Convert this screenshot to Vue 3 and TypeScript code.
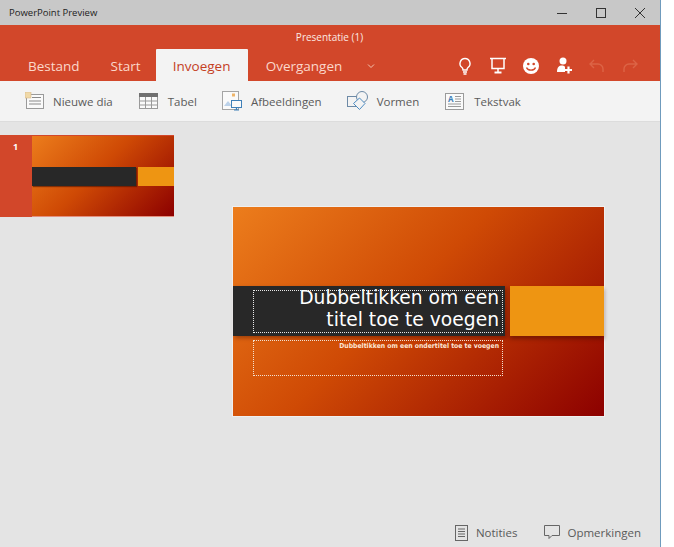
<script setup lang="ts">
const tabs = [
  { label: 'Bestand', active: false },
  { label: 'Start', active: false },
  { label: 'Invoegen', active: true },
  { label: 'Overgangen', active: false },
]
</script>

<template>
  <div class="app">
    <div class="window">
      <header class="titlebar">
        <span class="app-name">PowerPoint Preview</span>
        <div class="win-controls">
          <svg width="12" height="12" viewBox="0 0 12 12"><path d="M1 6.5h10" stroke="#333" fill="none" /></svg>
          <svg width="12" height="12" viewBox="0 0 12 12"><rect x="1.5" y="1.5" width="9" height="9" stroke="#333" fill="none" /></svg>
          <svg width="12" height="12" viewBox="0 0 12 12"><path d="M1 1l10 10M11 1L1 11" stroke="#333" fill="none" /></svg>
        </div>
      </header>

      <section class="ribbon">
        <div class="doc-title">Presentatie (1)</div>
        <div class="tabrow">
          <nav class="tabs">
            <span v-for="t in tabs" :key="t.label" class="tab" :class="{ active: t.active }">{{ t.label }}</span>
            <svg class="chev" width="8" height="6" viewBox="0 0 8 6"><path d="M1 1.500l3 3 3-3" stroke="#f4c4b0" fill="none" /></svg>
          </nav>
          <div class="actions">
            <svg width="18" height="20" viewBox="0 0 18 20"><path d="M9 2.500a5 5 0 0 0-3 9c.8.7 1 1.400 1 2.500h4c0-1.100.2-1.800 1-2.500a5 5 0 0 0-3-9z" stroke="#fff" stroke-width="1.400" fill="none" /><path d="M7 16h4M7.500 18h3" stroke="#fff" stroke-width="1.300" /></svg>
            <svg width="18" height="20" viewBox="0 0 18 20"><path d="M1 2.500h16M3 3v9.500h12V3M9 12.500V16" stroke="#fff" stroke-width="1.500" fill="none" /><path d="M5.500 15.500h7v2h-7z" fill="#fff" /></svg>
            <svg width="18" height="18" viewBox="0 0 18 18"><circle cx="9" cy="9" r="8" fill="#fff" /><circle cx="6.300" cy="7" r="1.300" fill="#d2472a" /><circle cx="11.700" cy="7" r="1.300" fill="#d2472a" /><path d="M4.500 10.500c1 3.500 8 3.500 9 0" stroke="#d2472a" stroke-width="1.300" fill="none" /></svg>
            <svg width="18" height="18" viewBox="0 0 18 18"><circle cx="8" cy="4" r="3.500" fill="#fff" /><path d="M2 15c0-5 2-6.500 5-6.500 1.500 0 2.500.5 3 1.500v5z" fill="#fff" /><path d="M13.500 9.500v7M10 13h7" stroke="#fff" stroke-width="2.200" /></svg>
            <svg width="18" height="14" viewBox="0 0 18 14"><path d="M6 1L2 5l4 4M2 5h8a5 5 0 0 1 5 5v3" stroke="#dc6446" stroke-width="1.400" fill="none" /></svg>
            <svg width="18" height="14" viewBox="0 0 18 14"><path d="M12 1l4 4-4 4M16 5H8a5 5 0 0 0-5 5v3" stroke="#dc6446" stroke-width="1.400" fill="none" /></svg>
          </div>
        </div>
      </section>

      <section class="toolbar">
        <div class="tool t1">
          <svg width="20" height="18" viewBox="0 0 20 18">
            <rect x="1.500" y="2.500" width="17" height="14" fill="#fafafa" stroke="#9a9a9a" />
            <rect x="0" y="0" width="6" height="6" fill="#f0d9a8" stroke="#d8b98a" stroke-width=".6" />
            <path d="M7 5.500h9M4 9h12M4 12h12" stroke="#8a8a8a" />
          </svg>
          <span>Nieuwe dia</span>
        </div>
        <div class="tool t2">
          <svg width="19" height="16" viewBox="0 0 19 16">
            <rect x=".5" y=".5" width="18" height="15" fill="#fafafa" stroke="#9a9a9a" />
            <rect x="0" y="0" width="19" height="4" fill="#707070" />
            <path d="M6.500 4v11M12.500 4v11M1 8h17M1 12h17" stroke="#9a9a9a" />
          </svg>
          <span>Tabel</span>
        </div>
        <div class="tool t3">
          <svg width="20" height="20" viewBox="0 0 20 20">
            <rect x=".5" y=".5" width="16" height="18" fill="#fafafa" stroke="#a5a5a5" />
            <rect x="10" y="2.500" width="3" height="3" fill="#efb56a" />
            <path d="M2 15l4-5 4 5z" fill="#bcd2ea" />
            <rect x="9.500" y="9.500" width="10" height="7" fill="#fafafa" stroke="#3f80b8" />
            <path d="M12 19h5M14.500 17v2" stroke="#3f80b8" stroke-width="1.200" />
          </svg>
          <span>Afbeeldingen</span>
        </div>
        <div class="tool t4">
          <svg width="22" height="20" viewBox="0 0 22 20">
            <rect x=".5" y="5.500" width="13" height="10" fill="none" stroke="#6d8aa6" />
            <circle cx="15" cy="6" r="5.500" fill="#f3f3f3" stroke="#6d8aa6" />
            <path d="M12.500 7l5.500 5.500-5.500 6-6-6z" fill="#f3f3f3" stroke="#4d8cc2" />
          </svg>
          <span>Vormen</span>
        </div>
        <div class="tool t5">
          <svg width="19" height="17" viewBox="0 0 19 17">
            <rect x=".5" y=".5" width="18" height="16" fill="#fafafa" stroke="#9a9a9a" />
            <text x="3" y="8.500" class="a-glyph">A</text>
            <path d="M10 3.500h6M10 6h6M10 8.500h6M3 11h13M3 13.500h13" stroke="#9a9a9a" />
          </svg>
          <span>Tekstvak</span>
        </div>
      </section>

      <main class="stage">
        <div class="workspace">
          <aside class="rail">
            <div class="thumb-row">
              <div class="thumb-tab">1</div>
              <div class="thumb">
                <div class="thumb-band">
                  <div class="thumb-dark"></div>
                  <div class="thumb-orange"></div>
                </div>
              </div>
            </div>
          </aside>
          <div class="slide">
            <div class="band">
              <div class="band-dark">
                <div class="title-box"><span class="title-text">Dubbeltikken om een<br />titel toe te voegen</span></div>
              </div>
              <div class="band-orange"></div>
            </div>
            <div class="sub-box">Dubbeltikken om een ondertitel toe te voegen</div>
          </div>
        </div>
        <footer class="status">
          <div class="status-item">
            <svg width="13" height="16" viewBox="0 0 13 16"><rect x=".5" y=".5" width="12" height="15" fill="none" stroke="#666" /><path d="M3 4h7M3 6.500h7M3 9h7M3 11.500h7" stroke="#666" /></svg>
            <span>Notities</span>
          </div>
          <div class="status-item comments">
            <svg width="16" height="15" viewBox="0 0 16 15"><path d="M.5.500h15v10H8l-3 3v-3H.5z" fill="none" stroke="#666" /></svg>
            <span>Opmerkingen</span>
          </div>
        </footer>
      </main>
    </div>
  </div>
</template>

<style>
html, body { margin: 0; background: #fff; }
</style>

<style scoped>
.app { width: 674px; height: 547px; overflow: hidden; font-family: "Open Sans", "Noto Sans", sans-serif; }
.window { width: 660px; height: 547px; display: flex; flex-direction: column; border-right: 1px solid #6f9bbd; }
.titlebar { height: 25px; flex: none; background: #c8c8c8; display: flex; align-items: center; justify-content: space-between; padding-left: 9px; }
.app-name { font-size: 9.500px; color: #222; }
.win-controls { display: flex; gap: 27px; margin-right: 14px; align-items: center; }
.ribbon { height: 56px; flex: none; background: #d2472a; display: flex; flex-direction: column; color: #fff; }
.doc-title { height: 24px; font-size: 10px; line-height: 25px; text-align: center; color: #fbe9e3; padding-right: 1px; }
.tabrow { flex: 1; display: flex; justify-content: space-between; align-items: stretch; }
.tabs { display: flex; padding-left: 28px; align-items: stretch; }
.tab { font-size: 13.500px; color: #fbd8cb; line-height: 34px; margin-right: 31px; }
.tab:nth-child(2) { margin-right: 15px; }
.tab.active { background: #f3f3f3; color: #c5401f; border-radius: 1px 1px 0 0; width: 92px; text-align: center; margin-right: 18px; }
.chev { align-self: center; margin-left: -6px; margin-top: 0; }
.actions { display: flex; gap: 15px; align-items: center; padding-right: 21px; margin-top: -1px; }
.toolbar { height: 40px; flex: none; background: #f3f3f3; border-bottom: 1px solid #dcdcdc; display: flex; align-items: center; padding-left: 25px; font-size: 11.500px; color: #5a5a5a; }
.tool { display: flex; align-items: center; gap: 8px; }
.t2 { margin-left: 26px; gap: 10px; }
.t3 { margin-left: 25px; gap: 9px; }
.t4 { margin-left: 25px; }
.t5 { margin-left: 26px; gap: 10px; }
.a-glyph { font-size: 8px; font-weight: 700; fill: #3f80b8; font-family: "Open Sans", sans-serif; }
.stage { flex: 1; min-height: 0; background: #e4e4e4; display: flex; flex-direction: column; }
.workspace { flex: 1; display: flex; min-height: 0; }
.rail { width: 233px; flex: none; padding-top: 13px; box-sizing: border-box; }
.thumb-row { display: flex; width: 174px; height: 82px; background: #d2472a; }
.thumb-tab { width: 32px; flex: none; color: #fff; font-size: 9px; font-weight: 700; text-align: center; line-height: 24px; padding-right: 1px; box-sizing: border-box; }
.thumb { width: 142px; height: 80px; margin-top: 1px; background: linear-gradient(135deg, #ec7d1c 0%, #cf4a05 45%, #8c0000 100%); display: flex; align-items: center; box-shadow: 0 1px 0 rgba(255, 255, 255, .4); }
.thumb-band { width: 100%; height: 19px; display: flex; gap: 2px; margin-top: 1px; }
.thumb-dark { width: 104px; background: #282828; box-shadow: 1px 1px 1px rgba(80, 20, 0, .6); }
.thumb-orange { flex: 1; background: #ee9512; }
.slide { width: 371px; height: 209px; margin-top: 85px; background: linear-gradient(135deg, #ec7d1c 0%, #cf4a05 45%, #8c0000 100%); display: flex; flex-direction: column; box-shadow: 0 0 0 1px rgba(255, 255, 255, .4); }
.band { display: flex; height: 50px; margin-top: 79px; gap: 5px; }
.band-dark { width: 272px; background: #282828; padding: 4px 0 0 20px; box-sizing: border-box; box-shadow: 2px 2px 4px rgba(60, 10, 0, .4); }
.band-orange { flex: 1; background: #ee9512; box-shadow: 0 3px 4px rgba(60, 10, 0, .45); }
.title-box { width: 250px; height: 43px; box-sizing: border-box; border: 1px dotted #e8e8e8; font-family: "DejaVu Sans", sans-serif; font-size: 18.700px; line-height: 22px; color: #fff; text-align: right; padding-right: 3px; }
.title-text { display: block; margin-top: -4px; }
.sub-box { width: 250px; height: 36px; margin: 4px 0 0 20px; box-sizing: border-box; border: 1px dotted #f3e0d0; font-family: "DejaVu Sans Condensed", "DejaVu Sans", sans-serif; font-stretch: condensed; font-size: 6.800px; font-weight: 700; line-height: 9px; color: #fde6d5; text-align: right; padding: 1px 3px 0 0; }
.status { height: 32px; flex: none; display: flex; justify-content: flex-end; align-items: center; gap: 27px; padding: 3px 19px 0 0; box-sizing: border-box; font-size: 11.500px; color: #5a5a5a; }
.status-item { display: flex; align-items: center; gap: 8px; }
.comments { gap: 7px; }
</style>
